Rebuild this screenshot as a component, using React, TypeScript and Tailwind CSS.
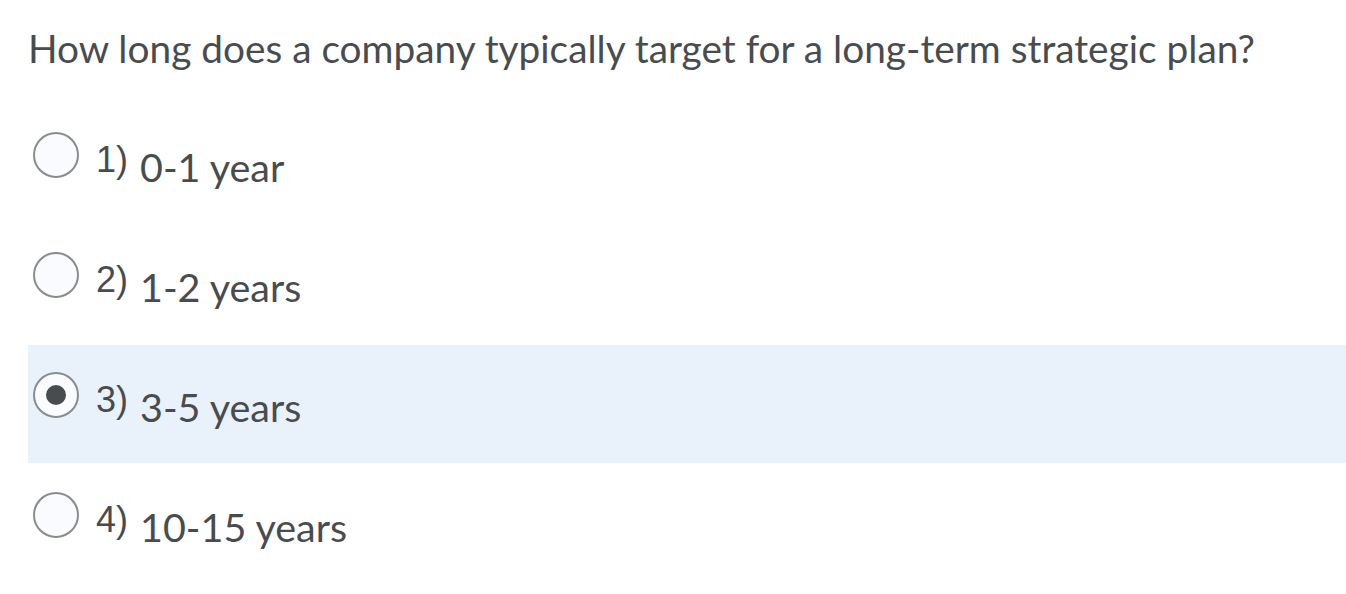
import React from "react";

const options = [
  { n: "1)", label: "0-1 year", selected: false },
  { n: "2)", label: "1-2 years", selected: false },
  { n: "3)", label: "3-5 years", selected: true },
  { n: "4)", label: "10-15 years", selected: false },
];

export default function App() {
  return (
    <div className="w-[1346px] h-[594px] bg-white pl-[28px] text-[#494c4e]" style={{ fontFamily: "Lato, 'Noto Sans', sans-serif" }}>
      <div className="pt-[24px] text-[38.8px] leading-[48px] whitespace-nowrap">
        How long does a company typically target for a long-term strategic plan?
      </div>
      <div className="mt-[33px] flex flex-col gap-[2px]">
        {options.map((o) => (
          <div
            key={o.n}
            className={`h-[118px] flex items-start pt-[24px] pl-[5px] ${o.selected ? "bg-[#e9f1fb]" : ""}`}
          >
            <div className="mt-[3px] w-[46px] h-[46px] rounded-full border-2 border-[#888c8f] bg-[#f9fbff] flex items-center justify-center shrink-0">
              {o.selected && <div className="w-[20px] h-[20px] rounded-full bg-[#494c4e]" />}
            </div>
            <span
              className="ml-[17px] mt-[12px] text-[36px] leading-[38px]"
              style={{ fontFamily: "'Liberation Sans', Arial, sans-serif" }}
            >
              {o.n}
            </span>
            <span className="ml-[12px] mt-[16px] text-[39.5px] leading-[44px] whitespace-nowrap">{o.label}</span>
          </div>
        ))}
      </div>
    </div>
  );
}
